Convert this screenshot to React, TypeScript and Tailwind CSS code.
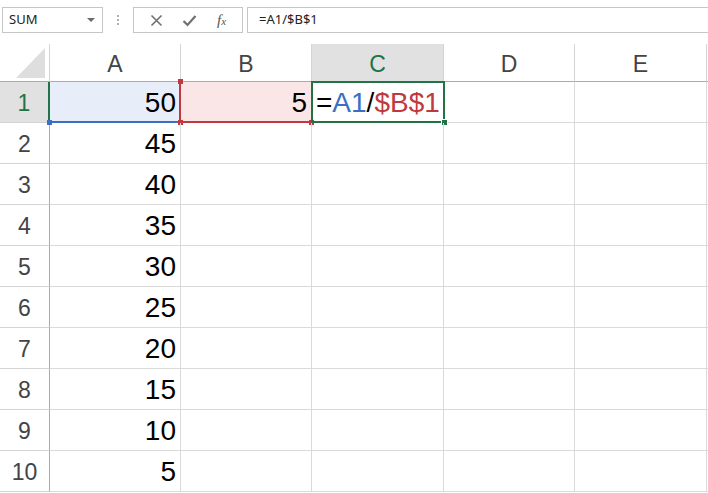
import React from 'react'

const COLS = ['A', 'B', 'C', 'D', 'E']
const VALUES = [50, 45, 40, 35, 30, 25, 20, 15, 10, 5]
const GRID = 'grid grid-cols-[50px_131px_131px_132px_131px_132px_40px]'
const FONT = { fontFamily: '"Liberation Sans", Arial, sans-serif' }

function Toolbar() {
  return (
    <div className="h-[44px] flex items-start pt-[7px] pl-[2px] text-[13px] text-[#222]" style={{ fontFamily: '"Noto Sans", "Open Sans", sans-serif' }}>
      <div className="w-[101px] h-[26px] border border-[#c6c6c6] flex items-center justify-between pl-[6px] pr-[7px]">
        <span>SUM</span>
        <span className="w-0 h-0 border-l-[4px] border-r-[4px] border-t-[4px] border-l-transparent border-r-transparent border-t-[#6b6b6b]" />
      </div>
      <div className="w-[30px] h-[26px] flex flex-col items-center justify-center gap-[2px]">
        <span className="w-[2px] h-[2px] bg-[#b0b0b0]" />
        <span className="w-[2px] h-[2px] bg-[#b0b0b0]" />
        <span className="w-[2px] h-[2px] bg-[#b0b0b0]" />
      </div>
      <div className="w-[110px] h-[26px] border border-[#c6c6c6] flex items-center justify-around px-[6px]">
        <svg width="13" height="13" viewBox="0 0 13 13">
          <path d="M1.5 1.5 L11.5 11.5 M11.5 1.5 L1.5 11.5" stroke="#707070" strokeWidth="1.6" />
        </svg>
        <svg width="15" height="13" viewBox="0 0 15 13">
          <path d="M1.5 7 L5.5 11 L13.5 2" stroke="#707070" strokeWidth="2.2" fill="none" />
        </svg>
        <span className="italic text-[15px] text-[#555] leading-none" style={{ fontFamily: '"Liberation Serif", serif' }}>
          f<span className="text-[11px]">x</span>
        </span>
      </div>
      <div className="ml-[4px] flex-1 h-[26px] border border-r-0 border-[#c6c6c6] flex items-center pl-[11px]">
        =A1/$B$1
      </div>
    </div>
  )
}

function Handle({ className }: { className: string }) {
  return <span className={`absolute w-[5px] h-[5px] ${className}`} />
}

export default function App() {
  return (
    <div className="w-[708px] h-[493px] overflow-hidden bg-white" style={FONT}>
      <Toolbar />
      <div className={GRID}>
        <div className="h-[38px] border-r border-b border-r-[#d4d4d4] border-b-[#ababab] flex items-end justify-end pr-[4px] pb-[3px]">
          <span className="w-0 h-0 border-l-[29px] border-b-[30px] border-l-transparent border-b-[#dedede]" />
        </div>
        {COLS.map((c) => (
          <div
            key={c}
            className={`h-[38px] pt-[3px] border-r border-b border-r-[#d4d4d4] border-b-[#ababab] flex items-center justify-center text-[23px] ${
              c === 'C' ? 'bg-[#e1e1e1] text-[#217346]' : 'text-[#444]'
            }`}
          >
            {c}
          </div>
        ))}
        <div className="h-[38px] border-b border-b-[#ababab]" />

        {VALUES.map((v, i) => {
          const row = i + 1
          const first = row === 1
          return (
            <React.Fragment key={row}>
              <div
                className={`h-[41px] pt-[2px] border-r border-b border-b-[#d4d4d4] flex items-center justify-center text-[23px] ${
                  first ? 'bg-[#e1e1e1] text-[#217346] border-r-[#217346] border-r-2' : 'text-[#444] border-r-[#ababab]'
                }`}
              >
                {row}
              </div>
              <div
                className={`relative h-[41px] pt-[2px] border-r border-b border-[#dadada] flex items-center justify-end pr-[4px] text-[28px] text-black ${
                  first ? 'bg-[#e8eef9]' : ''
                }`}
              >
                {v}
                {first && (
                  <>
                    <span className="absolute left-0 right-[1px] bottom-[-1px] h-[2px] bg-[#3a6fc4]" />
                    <Handle className="left-[-3px] bottom-[-3px] bg-[#3a6fc4]" />
                  </>
                )}
              </div>
              <div
                className={`relative h-[41px] pt-[2px] border-r border-b border-[#dadada] flex items-center justify-end pr-[4px] text-[28px] text-black ${
                  first ? 'bg-[#fbe6e7]' : ''
                }`}
              >
                {first ? 5 : ''}
                {first && (
                  <>
                    <span className="absolute left-[-2px] top-0 bottom-[-1px] w-[2px] bg-[#c0393f]" />
                    <span className="absolute left-0 right-0 bottom-[-1px] h-[2px] bg-[#c0393f]" />
                    <Handle className="left-[-3px] top-[-3px] bg-[#c0393f]" />
                    <Handle className="left-[-3px] bottom-[-3px] bg-[#c0393f]" />
                    <Handle className="right-[-3px] bottom-[-3px] bg-[#c0393f]" />
                  </>
                )}
              </div>
              <div className="relative h-[41px] pt-[2px] border-r border-b border-[#dadada] flex items-center pl-[4px] text-[28px] text-black">
                {first && (
                  <>
                    <span>=</span>
                    <span className="text-[#3a6fc4]">A1</span>
                    <span>/</span>
                    <span className="text-[#c0393f]">$B$1</span>
                    <span className="absolute left-[-1px] top-[-1px] right-[-2px] bottom-[-1px] border-2 border-[#217346]" />
                    <span className="absolute right-[-5px] bottom-[-4px] w-[7px] h-[7px] bg-[#217346] border border-white" />
                  </>
                )}
              </div>
              <div className="h-[41px] border-r border-b border-[#dadada]" />
              <div className="h-[41px] border-r border-b border-[#dadada]" />
              <div className="h-[41px] border-b border-[#dadada]" />
            </React.Fragment>
          )
        })}
      </div>
    </div>
  )
}
